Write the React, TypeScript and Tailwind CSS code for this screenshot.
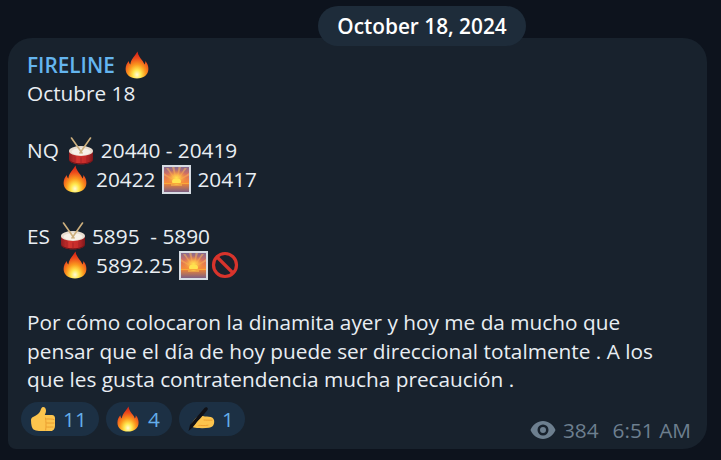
const Fire = ({ size = 28 }: { size?: number }) => (
  <svg width={size} height={size} viewBox="0 0 28 28" className="inline-block shrink-0">
    <defs>
      <radialGradient id="flame" cx="50%" cy="86%" r="78%">
        <stop offset="0%" stopColor="#fffbd8" />
        <stop offset="22%" stopColor="#ffe94f" />
        <stop offset="48%" stopColor="#fb9a1e" />
        <stop offset="78%" stopColor="#ec4a1c" />
        <stop offset="100%" stopColor="#d92a18" />
      </radialGradient>
    </defs>
    <path transform="translate(0.700 0) scale(0.950 1)" d="M14.500.500c.6 4 3 6.500 5.200 9.300 1.100 1.400 1.700 2.500 2 3.700.9-.9 1.200-2.100 1-3.500C25.300 12.600 26 15.500 26 18c0 5.800-5.200 9.500-12 9.500S2 23.800 2 18c0-3.200 1.400-5.800 3.400-8 .1 1.500.6 2.700 1.600 3.500C7.300 8.500 11.500 5.500 14.500.500z" fill="url(#flame)" />
  </svg>
)

const Drum = () => (
  <svg width="28" height="28" viewBox="0 0 28 28" className="inline-block shrink-0">
    <defs>
      <linearGradient id="drumBody" x1="0" y1="0" x2="1" y2="0">
        <stop offset="0%" stopColor="#8f1c20" />
        <stop offset="35%" stopColor="#d2352f" />
        <stop offset="70%" stopColor="#c52b2a" />
        <stop offset="100%" stopColor="#7f181c" />
      </linearGradient>
    </defs>
    <path d="M2 14v8.500c0 2.800 5.500 4.800 12 4.800s12-2 12-4.800V14z" fill="url(#drumBody)" />
    <path d="M2 21.500c0 2.800 5.500 4.800 12 4.800s12-2 12-4.800v1c0 2.800-5.500 4.800-12 4.800S2 25.300 2 22.500z" fill="#6e1418" />
    <path d="M8 19.500v6M14 20.500v6M20 19.500v6" stroke="#a82326" strokeWidth="1" />
    <ellipse cx="14" cy="14" rx="12" ry="5" fill="#e9ded0" />
    <ellipse cx="14" cy="14.800" rx="9.500" ry="3.500" fill="#f7f1e8" />
    <path d="M4.500 1l10.500 15M23.500 1L13 16" stroke="#cdb07e" strokeWidth="1.600" strokeLinecap="round" />
  </svg>
)

const Sunrise = () => (
  <svg width="29" height="29" viewBox="0 0 29 29" className="inline-block shrink-0">
    <defs>
      <linearGradient id="sky" x1="0" y1="0" x2="0" y2="1">
        <stop offset="0%" stopColor="#86698f" />
        <stop offset="30%" stopColor="#d8705f" />
        <stop offset="62%" stopColor="#f58a3a" />
        <stop offset="68%" stopColor="#e8823a" />
        <stop offset="100%" stopColor="#7d5f82" />
      </linearGradient>
      <radialGradient id="sunGlow" cx="50%" cy="60%" r="45%">
        <stop offset="0%" stopColor="#ffe24f" />
        <stop offset="35%" stopColor="#fdbe4a" stopOpacity="0.900" />
        <stop offset="100%" stopColor="#f58a3a" stopOpacity="0" />
      </radialGradient>
    </defs>
    <rect width="29" height="29" fill="#d6dce3" />
    <rect x="2" y="2" width="25" height="25" fill="url(#sky)" />
    <path d="M14.500 16.500L4 3h2.500zM14.500 16.500L10 2h2.500zM14.500 16.500L19 2h-2.500zM14.500 16.500L25 3h-2.500zM14.500 16.500L2 8v2.500zM14.500 16.500L27 8v2.500z" fill="#f9b65a" opacity="0.550" />
    <rect x="2" y="2" width="25" height="18" fill="url(#sunGlow)" />
    <ellipse cx="14.500" cy="16.500" rx="4.500" ry="3" fill="#ffe34f" />
    <rect x="2" y="18" width="25" height="1" fill="#f9a83a" />
    <path d="M9 20h11" stroke="#fbc548" strokeWidth="1" />
  </svg>
)

const NoEntry = () => (
  <svg width="28" height="28" viewBox="0 0 28 28" className="inline-block shrink-0">
    <circle cx="14" cy="14" r="11.500" fill="#1a222d" stroke="#d8342c" strokeWidth="3.200" />
    <path d="M6 6l16 16" stroke="#d8342c" strokeWidth="3.200" />
  </svg>
)

const ThumbsUp = () => (
  <svg width="26" height="26" viewBox="0 0 26 26" className="shrink-0">
    <path d="M1 14c0-1.500 1-2.800 2.500-3.300 2.500-.9 5.500-3 6.800-5.700.7-1.500.7-3.500 2.400-4 2-.4 3.300 1.500 3.300 3.500 0 2-.7 3.400-1.200 4.500H22c2 0 3 1.300 3 3.500v7c0 3-1.500 5.500-4 5.500H9c-2.500 0-4-.8-5.500-1.500C2 22.200 1 19 1 14z" fill="#fcc44d" />
    <path d="M16.500 13c2 0 5.500-.2 7.500.5M16.500 17c2 .2 5 0 7.500 0M16.500 21c1.500.2 4 0 6.500 0M15.500 12c.5 3 .8 8 .2 12" stroke="#ec9f30" strokeWidth="1" strokeLinecap="round" fill="none" />
  </svg>
)

const WritingHand = () => (
  <svg width="28" height="26" viewBox="0 0 28 26" className="shrink-0">
    <path d="M4 19C6 15 9 11 12.500 10c2-.5 3.500.3 5.500.5 2.500.3 5.500-.3 7.500 1.300 1.700 1.300 2 3.700 1.500 5.700-.5 2.500-2.500 4-5 4.300-3.500.4-8 .4-12 .2-2-.1-4-.6-6-1.500z" fill="#fcc44d" />
    <path d="M11 19c3 .8 7 .8 10 .2M17 14c2 .2 5 .2 8 .2" stroke="#ec9f30" strokeWidth="1" strokeLinecap="round" fill="none" />
    <path d="M1.500 25L3 19 17.500 2c.8-.9 2-1 2.800-.3.800.7.600 1.900-.2 2.800L5.500 21.500z" fill="#101015" />
    <path d="M8.500 18.500c1.300-2.500 3-4.500 5-5.300 1.700-.6 3-.1 2.700 1.100-.3 1.200-2 2.200-3.400 3.900-1 1.200-3 1.300-4.300.3z" fill="#fcc44d" />
  </svg>
)

const EyeIcon = () => (
  <svg width="26" height="18" viewBox="0 0 26 18" className="shrink-0">
    <path fillRule="evenodd" d="M13 0C7.500 0 2.800 3.600 0.500 9 2.800 14.400 7.500 18 13 18s10.200-3.600 12.500-9C23.200 3.600 18.500 0 13 0zm0 14.500A5.500 5.500 0 1 1 13 3.500a5.500 5.500 0 0 1 0 11zM13 6a3 3 0 1 0 0 6 3 3 0 0 0 0-6z" fill="#6d7f8f" />
  </svg>
)

const reactions = [
  { icon: <ThumbsUp />, count: 11, box: 'w-[78px] pl-[9px]' },
  { icon: <Fire size={26} />, count: 4, box: 'w-[66px] pl-[9px]' },
  { icon: <WritingHand />, count: 1, box: 'w-[66px] pl-[8px]' },
]

export default function App() {
  return (
    <div className="w-[721px] h-[460px] overflow-hidden bg-[#0d131d] flex flex-col font-['Open_Sans',sans-serif] text-[20.8px] leading-[28.6px] text-[#e9eef3]">
      {/* Date pill */}
      <div className="relative z-10 self-start ml-[318px] mt-1.5 h-10 w-52 rounded-full bg-[#1e2c3a] flex items-center justify-center font-semibold text-white">
        October 18, 2024
      </div>

      {/* Message bubble */}
      <div className="-mt-2 ml-2 w-[699px] h-[411px] rounded-t-3xl rounded-br-3xl rounded-bl-lg bg-[#18222d] flex flex-col pl-[19px] pr-4 pt-[12.6px]">
        <div className="flex items-center h-[28.6px] gap-[8px] font-semibold text-[#64b5ef]">
          FIRELINE
          <Fire />
        </div>
        <div className="h-[28.6px]">Octubre 18</div>
        <div className="h-[28.6px]" />

        <div className="flex items-center h-[28.6px]">
          NQ
          <span className="ml-[8px] mr-[6px] flex"><Drum /></span>
          20440 - 20419
        </div>
        <div className="flex items-center h-[28.6px] pl-[34px]">
          <Fire />
          <span className="ml-[7px] mr-[7px]">20422</span>
          <Sunrise />
          <span className="ml-[6px]">20417</span>
        </div>
        <div className="h-[28.6px]" />

        <div className="flex items-center h-[28.6px] whitespace-pre">
          ES
          <span className="ml-[9px] mr-[5px] flex"><Drum /></span>
          5895  - 5890
        </div>
        <div className="flex items-center h-[28.6px] pl-[34px]">
          <Fire />
          <span className="ml-[7px] mr-[6px]">5892.25</span>
          <Sunrise />
          <span className="ml-[3px] flex"><NoEntry /></span>
        </div>
        <div className="h-[28.6px]" />

        <p>
          Por cómo colocaron la dinamita ayer y hoy me da mucho que
          <br />
          pensar que el día de hoy puede ser direccional totalmente . A los
          <br />
          que les gusta contratendencia mucha precaución .
        </p>

        {/* Reactions and meta */}
        <div className="mt-[8.4px] -ml-1.5 flex items-start justify-between">
          <div className="flex gap-[7px]">
            {reactions.map((r, idx) => (
              <div key={idx} className={`${r.box} h-[34px] rounded-full bg-[#1c3044] flex items-center gap-[7px] font-medium text-[#64aeea]`}>
                {r.icon}
                <span>{r.count}</span>
              </div>
            ))}
          </div>
          <div className="mt-[14px] flex items-center text-[#6d7f8f]">
            <EyeIcon />
            <span className="ml-[7px]">384</span>
            <span className="ml-[14px]">6:51 AM</span>
          </div>
        </div>
      </div>
    </div>
  )
}
